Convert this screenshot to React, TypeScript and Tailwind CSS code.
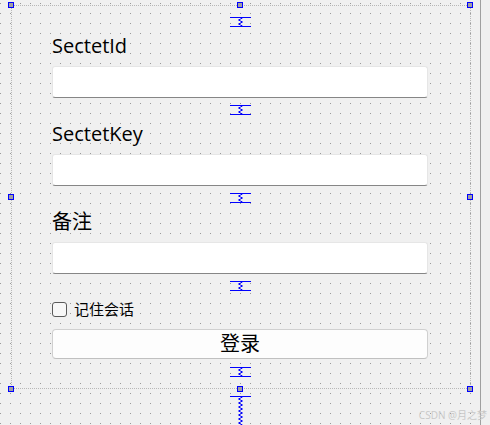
const HANDLES = [
  "left-[8px] top-[2px]",
  "left-[237px] top-[2px]",
  "left-[467px] top-[2px]",
  "left-[8px] top-[194px]",
  "left-[467px] top-[194px]",
  "left-[8px] top-[386px]",
  "left-[237px] top-[386px]",
  "left-[467px] top-[386px]"
];

const FIELDS = ["SectetId", "SectetKey", "备注"];

function Spacer({ className = "" }: { className?: string }) {
  return (
    <svg width="21" height="10" viewBox="0 0 21 10" className={`mx-auto block ${className}`}>
      <line x1="0" y1="0.5" x2="21" y2="0.5" stroke="#0000ff" />
      <line x1="0" y1="9.5" x2="21" y2="9.5" stroke="#0000ff" />
      <polyline points="12.5,1 8.5,3 12.5,5 8.5,7 12.5,9" fill="none" stroke="#0000ff" />
    </svg>
  );
}

function TallSpacer() {
  return (
    <svg width="21" height="29" viewBox="0 0 21 29" className="mx-auto mt-[19px] block">
      <line x1="0" y1="0.5" x2="21" y2="0.5" stroke="#0000ff" />
      <polyline
        points="12.5,1 8.5,3 12.5,5 8.5,7 12.5,9 8.5,11 12.5,13 8.5,15 12.5,17 8.5,19 12.5,21 8.5,23 12.5,25 8.5,27 12.5,29"
        fill="none"
        stroke="#0000ff"
      />
    </svg>
  );
}

export default function App() {
  return (
    <div className="relative flex h-[425px] w-[490px] overflow-hidden bg-[#f0f0f0] font-['Open_Sans','Noto_Sans_CJK_SC',sans-serif] text-black">
      <div className="h-full w-[481px] border-r border-[#a0a0a0] bg-[conic-gradient(from_270deg_at_1px_1px,#9a9a9a_90deg,transparent_0)] bg-[length:10px_10px] bg-[position:0_3px] px-[52px] pt-[17px]">
        <Spacer />
        {FIELDS.map((label, i) => (
          <div key={label}>
            {i > 0 && <Spacer className="mt-[7px]" />}
            <div className="mt-[5px] h-[28px] text-[20px] leading-[28px]">{label}</div>
            <div className="mt-[6px] h-[32px] rounded-[3px] border border-[#e6e6e6] border-b-[#868686] bg-white" />
          </div>
        ))}
        <Spacer className="mt-[7px]" />
        <div className="mt-[8px] flex h-[20px] items-center gap-[7px]">
          <div className="h-[15px] w-[15px] rounded-[3px] border border-[#5a5a5a] bg-[#f7f7f7]" />
          <span className="text-[15px] leading-[20px]">记住会话</span>
        </div>
        <div className="mt-[10px] flex h-[30px] items-center justify-center rounded-[4px] border border-[#d0d0d0] border-b-[#c0c0c0] bg-[#fdfdfd] text-[20px] leading-none">
          登录
        </div>
        <Spacer className="mt-[8px]" />
        <TallSpacer />
      </div>

      <div className="absolute left-[11px] top-[5px] h-[384px] w-[460px] border border-dotted border-[#b8b8b8]" />
      {HANDLES.map((pos) => (
        <div key={pos} className={`absolute h-[6px] w-[6px] border border-[#0000ff] bg-[#a0a0a0] ${pos}`} />
      ))}
      <span className="absolute bottom-[5px] right-[3px] text-[10px] leading-none text-[#c8c8c8]">CSDN @月之梦</span>
    </div>
  );
}
